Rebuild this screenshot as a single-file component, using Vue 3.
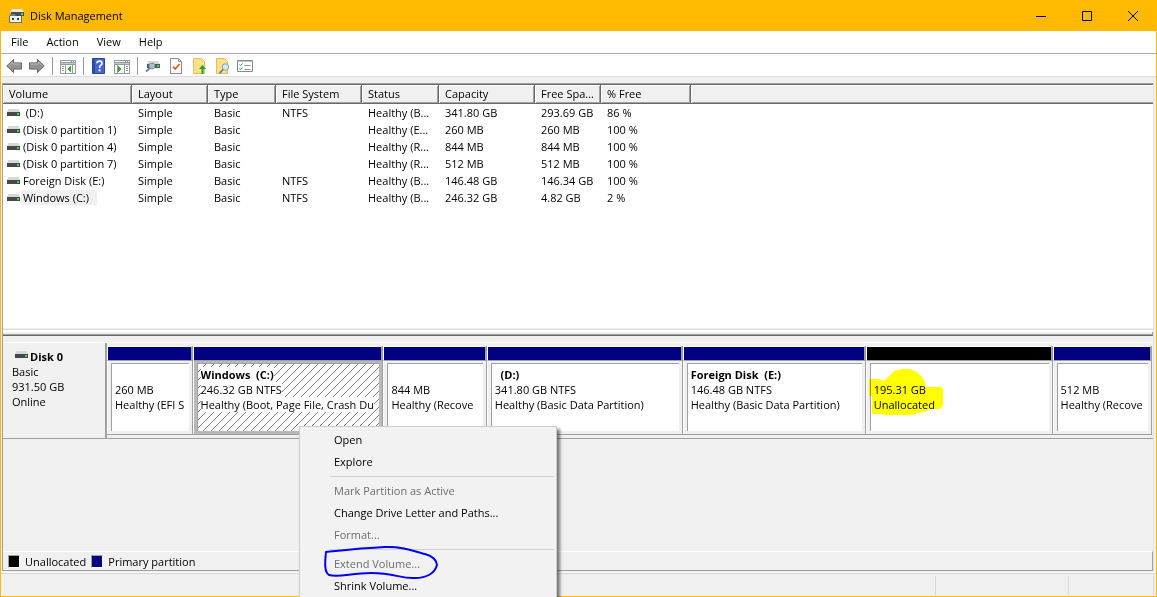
<script setup>
const menus = ['File', 'Action', 'View', 'Help']

const columns = ['Volume', 'Layout', 'Type', 'File System', 'Status', 'Capacity', 'Free Spa...', '% Free']

const volumes = [
  { name: '\u00a0(D:)', fs: 'NTFS', status: 'Healthy (B...', capacity: '341.80 GB', free: '293.69 GB', pct: '86 %' },
  { name: '(Disk 0 partition 1)', fs: '', status: 'Healthy (E...', capacity: '260 MB', free: '260 MB', pct: '100 %' },
  { name: '(Disk 0 partition 4)', fs: '', status: 'Healthy (R...', capacity: '844 MB', free: '844 MB', pct: '100 %' },
  { name: '(Disk 0 partition 7)', fs: '', status: 'Healthy (R...', capacity: '512 MB', free: '512 MB', pct: '100 %' },
  { name: 'Foreign Disk (E:)', fs: 'NTFS', status: 'Healthy (B...', capacity: '146.48 GB', free: '146.34 GB', pct: '100 %' },
  { name: 'Windows (C:)', fs: 'NTFS', status: 'Healthy (B...', capacity: '246.32 GB', free: '4.82 GB', pct: '2 %', selected: true }
]

const partitions = [
  { id: 'efi', label: '', size: '260 MB', state: 'Healthy (EFI S', share: 85 },
  { id: 'c', label: 'Windows\u00a0 (C:)', size: '246.32 GB NTFS', state: 'Healthy (Boot, Page File, Crash Du', share: 191, selected: true },
  { id: 'rec4', label: '', size: '844 MB', state: 'Healthy (Recove', share: 103 },
  { id: 'd', label: '\u00a0 (D:)', size: '341.80 GB NTFS', state: 'Healthy (Basic Data Partition)', share: 196 },
  { id: 'e', label: 'Foreign Disk\u00a0 (E:)', size: '146.48 GB NTFS', state: 'Healthy (Basic Data Partition)', share: 183 },
  { id: 'free', label: '', size: '195.31 GB', state: 'Unallocated', share: 187, unallocated: true },
  { id: 'rec7', label: '', size: '512 MB', state: 'Healthy (Recove', share: 99 }
]

const actions = [
  { text: 'Open' },
  { text: 'Explore' },
  { divider: true },
  { text: 'Mark Partition as Active', disabled: true },
  { text: 'Change Drive Letter and Paths...' },
  { text: 'Format...', disabled: true },
  { divider: true },
  { text: 'Extend Volume...', disabled: true, circled: true },
  { text: 'Shrink Volume...' }
]
</script>

<template>
  <div class="window">
    <header class="titlebar">
      <svg class="app-icon" width="16" height="16" viewBox="0 0 16 16">
        <path d="M3 1h10l2 3H1z" fill="#e9e9ea" />
        <path d="M2 4h13v4H2z" fill="#4a4c50" />
        <path d="M12 5h2v2h-2z" fill="#35e04a" />
        <path d="M1 6h5l1 3H0z" fill="#777a80" />
        <path d="M0 8h13v7H0z" fill="#6b6e74" />
        <path d="M1 8h11v6H1z" fill="#f2f2f3" />
        <path d="M3 10h2v2H3zM8 10h2v2H8z" fill="#3c3e42" />
      </svg>
      <h1>Disk Management</h1>
      <div class="window-controls">
        <button type="button" aria-label="Minimize">
          <svg width="10" height="10" viewBox="0 0 10 10"><path d="M0 5.5h10" stroke="#000" /></svg>
        </button>
        <button type="button" aria-label="Maximize">
          <svg width="10" height="10" viewBox="0 0 10 10"><path d="M.5.5h9v9h-9z" fill="none" stroke="#000" /></svg>
        </button>
        <button type="button" aria-label="Close">
          <svg width="10" height="10" viewBox="0 0 10 10"><path d="M0 0l10 10M10 0L0 10" stroke="#000" /></svg>
        </button>
      </div>
    </header>

    <nav class="menubar">
      <button v-for="m in menus" :key="m" type="button">{{ m }}</button>
    </nav>

    <div class="toolbar">
      <button type="button" aria-label="Back">
        <svg width="16" height="16" viewBox="0 0 16 16">
          <path d="M.7 8L7.5 1.500v3.400h8v6.200h-8v3.400z" fill="#929292" stroke="#666" />
          <path d="M2.500 8L6.500 4v2h8" fill="none" stroke="#b9b9b9" />
        </svg>
      </button>
      <button type="button" aria-label="Forward">
        <svg width="16" height="16" viewBox="0 0 16 16">
          <path d="M15.300 8L8.500 1.500v3.400h-8v6.200h8v3.400z" fill="#929292" stroke="#666" />
          <path d="M13.500 8l-4-4v2h-8" fill="none" stroke="#b9b9b9" />
        </svg>
      </button>
      <span class="sep"></span>
      <button type="button" aria-label="Show console tree">
        <svg width="16" height="16" viewBox="0 0 16 16" shape-rendering="crispEdges">
          <path d="M0 2h16v14H0z" fill="#949aa3" />
          <path d="M1 3h10v1H1zM12 3h1v1h-1zM14 3h1v1h-1z" fill="#fff" />
          <path d="M1 5h14v1H1z" fill="#c3c9d1" />
          <path d="M1 7h4v8H1zM6 7h6v8H6zM13 7h2v8h-2z" fill="#fff" />
          <path d="M2 8h2v1H2zM2 10h2v1H2zM2 12h2v1H2z" fill="#7a8ea8" />
          <path d="M11 8v6L7 11z" fill="#35a82c" />
        </svg>
      </button>
      <span class="sep"></span>
      <button type="button" aria-label="Help">
        <svg width="16" height="16" viewBox="0 0 16 16">
          <path d="M1.500.5h12v15h-12z" fill="#3f67cf" stroke="#2a449b" />
          <path d="M2 1h2v14H2z" fill="#2b4cab" />
          <path d="M6 5.200C6 2.400 11 2.400 11 5.200 11 7.200 8.500 7.300 8.500 10" fill="none" stroke="#fff" stroke-width="1.700" />
          <path d="M7.600 11.400h1.900v1.900H7.600z" fill="#fff" />
        </svg>
      </button>
      <button type="button" aria-label="Show action pane">
        <svg width="16" height="16" viewBox="0 0 16 16" shape-rendering="crispEdges">
          <path d="M0 2h16v14H0z" fill="#949aa3" />
          <path d="M1 3h10v1H1zM12 3h1v1h-1zM14 3h1v1h-1z" fill="#fff" />
          <path d="M1 5h14v1H1z" fill="#c3c9d1" />
          <path d="M1 7h2v8H1zM4 7h6v8H4zM11 7h4v8h-4z" fill="#fff" />
          <path d="M12 8h2v1h-2zM12 10h2v1h-2zM12 12h2v1h-2z" fill="#7a8ea8" />
          <path d="M4 8v6l4-3z" fill="#35a82c" />
        </svg>
      </button>
      <span class="sep"></span>
      <button type="button" aria-label="Rescan disks">
        <svg width="16" height="16" viewBox="0 0 16 16">
          <path d="M3 3h10l2 3H2z" fill="#d7d9dc" />
          <path d="M2 6h13v4H2z" fill="#55585d" />
          <path d="M12 7h2v2h-2z" fill="#2fe03a" />
          <circle cx="7" cy="8" r="3" fill="#9fc3dc" stroke="#7d8c9b" />
          <path d="M5 10L1 13.500" stroke="#6f7d8c" stroke-width="1.800" />
        </svg>
      </button>
      <button type="button" aria-label="Check">
        <svg width="16" height="16" viewBox="0 0 16 16">
          <path d="M2.500.5h8l3 3v12h-11z" fill="#fdfdfd" stroke="#8d8d8d" />
          <path d="M10.500.5v3h3" fill="none" stroke="#8d8d8d" />
          <path d="M5 8.500l2.300 2.500L11.500 6" fill="none" stroke="#e8501e" stroke-width="1.700" />
        </svg>
      </button>
      <button type="button" aria-label="Up one level">
        <svg width="16" height="16" viewBox="0 0 16 16">
          <path d="M2.500.5h8l3 3v12h-11z" fill="#ffe08a" stroke="#e5bf5a" />
          <path d="M11.500 7l3.500 4h-2.500v5h-2v-5H8z" fill="#22a322" />
        </svg>
      </button>
      <button type="button" aria-label="Search">
        <svg width="16" height="16" viewBox="0 0 16 16">
          <path d="M2.500.5h8l3 3v12h-11z" fill="#ffe08a" stroke="#e5bf5a" />
          <circle cx="11.500" cy="9" r="3.300" fill="#d5e9f7" stroke="#7da0bd" />
          <path d="M9 11.500L5.500 15.300" stroke="#64809a" stroke-width="1.800" />
        </svg>
      </button>
      <button type="button" aria-label="Properties">
        <svg width="16" height="16" viewBox="0 0 16 16">
          <path d="M.5 2.500h15v11H.5z" fill="#fff" stroke="#828a93" />
          <path d="M1 3h14v1H1z" fill="#bfc5cc" />
          <path d="M2.500 6.500l1 1.200 2-2.200M2.500 10.500l1 1.200 2-2.200" fill="none" stroke="#2d84d0" />
          <path d="M7.500 7.500h6M7.500 11.500h6" stroke="#8b9096" />
        </svg>
      </button>
    </div>

    <main class="client">
      <section class="volume-list">
        <table>
          <colgroup>
            <col class="c-volume" /><col class="c-layout" /><col class="c-type" /><col class="c-fs" />
            <col class="c-status" /><col class="c-capacity" /><col class="c-free" /><col class="c-pct" /><col />
          </colgroup>
          <thead>
            <tr>
              <th v-for="c in columns" :key="c" scope="col">{{ c }}</th>
              <td></td>
            </tr>
          </thead>
          <tbody>
            <tr v-for="v in volumes" :key="v.name">
              <td class="volume-name">
                <div>
                  <svg width="13" height="8" viewBox="0 0 13 8" shape-rendering="crispEdges">
                    <path d="M1 0h11l1 4H0z" fill="#d5d8dc" />
                    <path d="M0 3h13v4H0z" fill="#46484c" />
                    <path d="M10 4h2v2h-2z" fill="#2fe03a" />
                  </svg>
                  <span :class="{ selected: v.selected }">{{ v.name }}</span>
                </div>
              </td>
              <td>Simple</td>
              <td>Basic</td>
              <td>{{ v.fs }}</td>
              <td>{{ v.status }}</td>
              <td>{{ v.capacity }}</td>
              <td>{{ v.free }}</td>
              <td>{{ v.pct }}</td>
              <td></td>
            </tr>
          </tbody>
        </table>
      </section>

      <div class="splitter"></div>

      <section class="graph">
        <div class="disk-row">
          <div class="disk-info">
            <h2>
              <svg width="13" height="8" viewBox="0 0 13 8" shape-rendering="crispEdges">
                <path d="M1 0h11l1 4H0z" fill="#d5d8dc" />
                <path d="M0 3h13v4H0z" fill="#46484c" />
                <path d="M10 4h2v2h-2z" fill="#2fe03a" />
              </svg>
              Disk 0
            </h2>
            <p>Basic</p>
            <p>931.50 GB</p>
            <p>Online</p>
          </div>
          <div class="partitions">
            <div
              v-for="p in partitions"
              :key="p.id"
              class="partition"
              :class="{ selected: p.selected, unallocated: p.unallocated }"
              :style="{ flexGrow: p.share }"
            >
              <div class="bar"></div>
              <div class="cell">
                <div class="box">
                  <svg v-if="p.selected" class="hatch" width="100%" height="100%">
                    <defs>
                      <pattern id="hatch" width="8" height="8" patternUnits="userSpaceOnUse">
                        <path d="M-1 9L9-1" stroke="#808080" stroke-width="1" shape-rendering="crispEdges" />
                      </pattern>
                    </defs>
                    <rect width="100%" height="100%" fill="url(#hatch)" />
                  </svg>
                  <div class="lines">
                    <p><b>{{ p.label || '\u00a0' }}</b></p>
                    <p><span>{{ p.size }}</span></p>
                    <p><span>{{ p.state }}</span></p>
                  </div>
                </div>
                <svg v-if="p.unallocated" class="marker" width="74" height="46" viewBox="0 0 74 46">
                  <path
                    d="M0 10h9l6 2 6-6 4-4 8-2h8l7 3 5 5 3 5v5h16l2 2v17l-3 3h-9l-6 3-8 1-4 2H17l-6-1H3V27H0z"
                    fill="#ff0"
                  />
                </svg>
              </div>
            </div>
          </div>
        </div>
      </section>

      <footer class="legend">
        <span class="swatch black"></span><span>Unallocated</span>
        <span class="swatch navy"></span><span>Primary partition</span>
      </footer>
    </main>

    <div class="statusbar">
      <span class="pane wide"></span>
      <span class="pane mid"></span>
      <span class="pane small"></span>
    </div>

    <div class="context-menu" role="menu">
      <template v-for="(a, i) in actions" :key="i">
        <hr v-if="a.divider" />
        <button v-else type="button" role="menuitem" :disabled="a.disabled">
          {{ a.text }}
          <svg v-if="a.circled" class="ring" width="116" height="34" viewBox="0 0 116 34">
            <path
              d="M3 6C22 4 40 2 62 1c22-1 32 6 40 7 8 2 12 7 12 11-2 8-10 13-22 13-14 1-20-5-44-5-20 0-32 5-42 2C1 26 2 16 3 6z"
              fill="none" stroke="#0000f0" stroke-width="2" stroke-linejoin="round"
            />
          </svg>
        </button>
      </template>
    </div>
  </div>
</template>

<style>
html,
body {
  margin: 0;
  height: 100%;
}
</style>

<style scoped>
* {
  box-sizing: border-box;
}

.window {
  position: relative;
  display: flex;
  flex-direction: column;
  height: 100vh;
  overflow: hidden;
  border: solid #ffb900;
  border-width: 0 1px;
  background: #f0f0f0;
  color: #000;
  font: 11px/15px "Open Sans", "Noto Sans", sans-serif;
}

button {
  border: 0;
  padding: 0;
  background: none;
  color: inherit;
  font: inherit;
}

h1,
h2,
p {
  margin: 0;
  font-size: inherit;
}

svg {
  display: block;
  flex: none;
}

.titlebar {
  display: flex;
  align-items: center;
  flex: none;
  height: 31px;
  padding-left: 8px;
  background: #ffb900;
}

h1 {
  margin-left: 5px;
  font-weight: 400;
}

.window-controls {
  display: flex;
  margin-left: auto;
}

.window-controls button {
  display: grid;
  place-items: center;
  width: 46px;
  height: 31px;
}

.menubar {
  display: flex;
  flex: none;
  height: 23px;
  padding-left: 1px;
  border-bottom: 1px solid #a9acb5;
  background: #fff;
}

.menubar button {
  padding: 0 9px 2px;
}

.toolbar {
  display: flex;
  align-items: center;
  gap: 7px;
  flex: none;
  height: 23px;
  padding: 2px 5px 0;
  border-bottom: 1px solid #dcdcdc;
  background: #fff;
}

.sep {
  width: 1px;
  height: 18px;
  background: #999;
}

.client {
  display: flex;
  flex-direction: column;
  flex: 1;
  min-height: 0;
  margin: 6px 2px 0 1px;
  border: 1px solid #a0a0a0;
  border-right-color: #e3e3e3;
  border-bottom: 0;
}

.volume-list {
  flex: 244 1 0;
  min-height: 0;
  border-top: 1px solid #696969;
  background: #fff;
}

table {
  width: 100%;
  border-collapse: separate;
  border-spacing: 0;
  table-layout: fixed;
}

.c-volume { width: 129px; }
.c-layout { width: 76px; }
.c-type { width: 68px; }
.c-fs { width: 86px; }
.c-status { width: 77px; }
.c-capacity { width: 96px; }
.c-free { width: 66px; }
.c-pct { width: 90px; }

thead th,
thead td {
  height: 19px;
  padding: 0 0 1px 6px;
  border-bottom: 1px solid #696969;
  background: #f0f0f0;
  box-shadow: inset 1px 1px #fff, inset 0 -1px #a0a0a0;
  font-weight: 400;
  text-align: left;
}

thead th {
  border-right: 1px solid #696969;
  box-shadow: inset 1px 1px #fff, inset -1px -1px #a0a0a0;
}

tbody td {
  height: 17px;
  padding: 0 0 0 6px;
  white-space: nowrap;
}

tbody .volume-name {
  padding-left: 4px;
}

.volume-name div {
  display: flex;
  align-items: center;
}

.volume-name span {
  margin-left: 1px;
  padding: 0 2px;
}

.volume-name .selected {
  padding-right: 8px;
  background: #f0f0f0;
}

.splitter {
  flex: none;
  height: 8px;
  border-top: 1px solid #f0f0f0;
  border-bottom: 1px solid #696969;
  background: #f0f0f0;
  box-shadow: inset 0 1px #dcdcdc, inset 0 3px #fff, inset -1px -1px #a0a0a0;
}

.graph {
  flex: 209 1 0;
  min-height: 0;
  padding-top: 6px;
}

.disk-row {
  display: flex;
  height: 97px;
  border-top: 1px solid #fff;
  border-bottom: 1px solid #a0a0a0;
}

.disk-info {
  flex: none;
  width: 104px;
  padding: 6px 0 0 9px;
  border-right: 2px solid #a0a0a0;
}

.disk-info h2 {
  display: flex;
  gap: 2px;
  padding-left: 3px;
}

.disk-info h2 svg {
  margin-top: 2px;
}

.partitions {
  display: flex;
  flex: 1;
  min-width: 0;
  padding: 3px 1px 3px 0;
}

.partition {
  display: flex;
  flex-direction: column;
  flex-basis: 0;
  min-width: 0;
  border-right: 1px solid #a0a0a0;
  border-bottom: 1px solid #a0a0a0;
}

.bar {
  flex: none;
  height: 15px;
  border: 1px solid #fff;
  border-right-color: #a0a0a0;
  border-bottom-color: #a0a0a0;
  background: #000080;
}

.unallocated .bar {
  background: #000;
}

.cell {
  position: relative;
  flex: 1;
  min-height: 0;
  padding: 2px 3px 3px;
  border-left: 1px solid #fff;
}

.selected .cell {
  background: #b8b8b8;
}

.box {
  position: relative;
  height: 100%;
  padding: 3px 1px 0 3px;
  border-top: 1px solid #a0a0a0;
  border-left: 1px solid #a0a0a0;
  background: #fff;
}

.hatch {
  position: absolute;
  inset: 0;
}

.lines {
  position: relative;
  z-index: 1;
  overflow: hidden;
  white-space: nowrap;
}

.selected .lines b,
.selected .lines span {
  display: inline-block;
  background: #fff;
}

.marker {
  position: absolute;
  top: 8px;
  left: 2px;
  z-index: 1;
  mix-blend-mode: multiply;
}

.legend {
  display: flex;
  align-items: center;
  gap: 5px;
  flex: none;
  height: 20px;
  padding-left: 5px;
  border-top: 1px solid #fff;
  border-right: 1px solid #a0a0a0;
  border-bottom: 1px solid #a0a0a0;
}

.swatch {
  width: 12px;
  height: 13px;
  border: 1px solid #a0a0a0;
  border-right-color: #fff;
  border-bottom-color: #fff;
}

.black { background: #000; }
.navy { background: #000080; }

.statusbar {
  display: flex;
  flex: none;
  height: 25px;
  margin-top: 1px;
  padding: 3px 2px 1px 0;
  border-top: 1px solid #fff;
  border-bottom: 1px solid #ffb900;
  box-shadow: inset 0 1px #d7d7d7;
}

.pane {
  border-right: 1px solid #d7d7d7;
}

.wide { flex: 1; }
.mid { width: 133px; }
.small { width: 85px; }

.context-menu {
  position: absolute;
  top: 426px;
  left: 298px;
  z-index: 2;
  width: 258px;
  padding: 2px 2px 24px;
  border: 1px solid #ccc;
  background: #f2f2f2;
  box-shadow: 3px 3px 3px rgba(0, 0, 0, 0.5);
}

.context-menu button {
  position: relative;
  display: block;
  width: 100%;
  height: 22px;
  padding: 0 0 2px 32px;
  text-align: left;
}

.context-menu button:disabled {
  color: #6d6d6d;
}

.context-menu hr {
  height: 1px;
  margin: 3px 0 3px 28px;
  border: 0;
  background: #d0d0d0;
}

.ring {
  position: absolute;
  top: -7px;
  left: 21px;
}
</style>
